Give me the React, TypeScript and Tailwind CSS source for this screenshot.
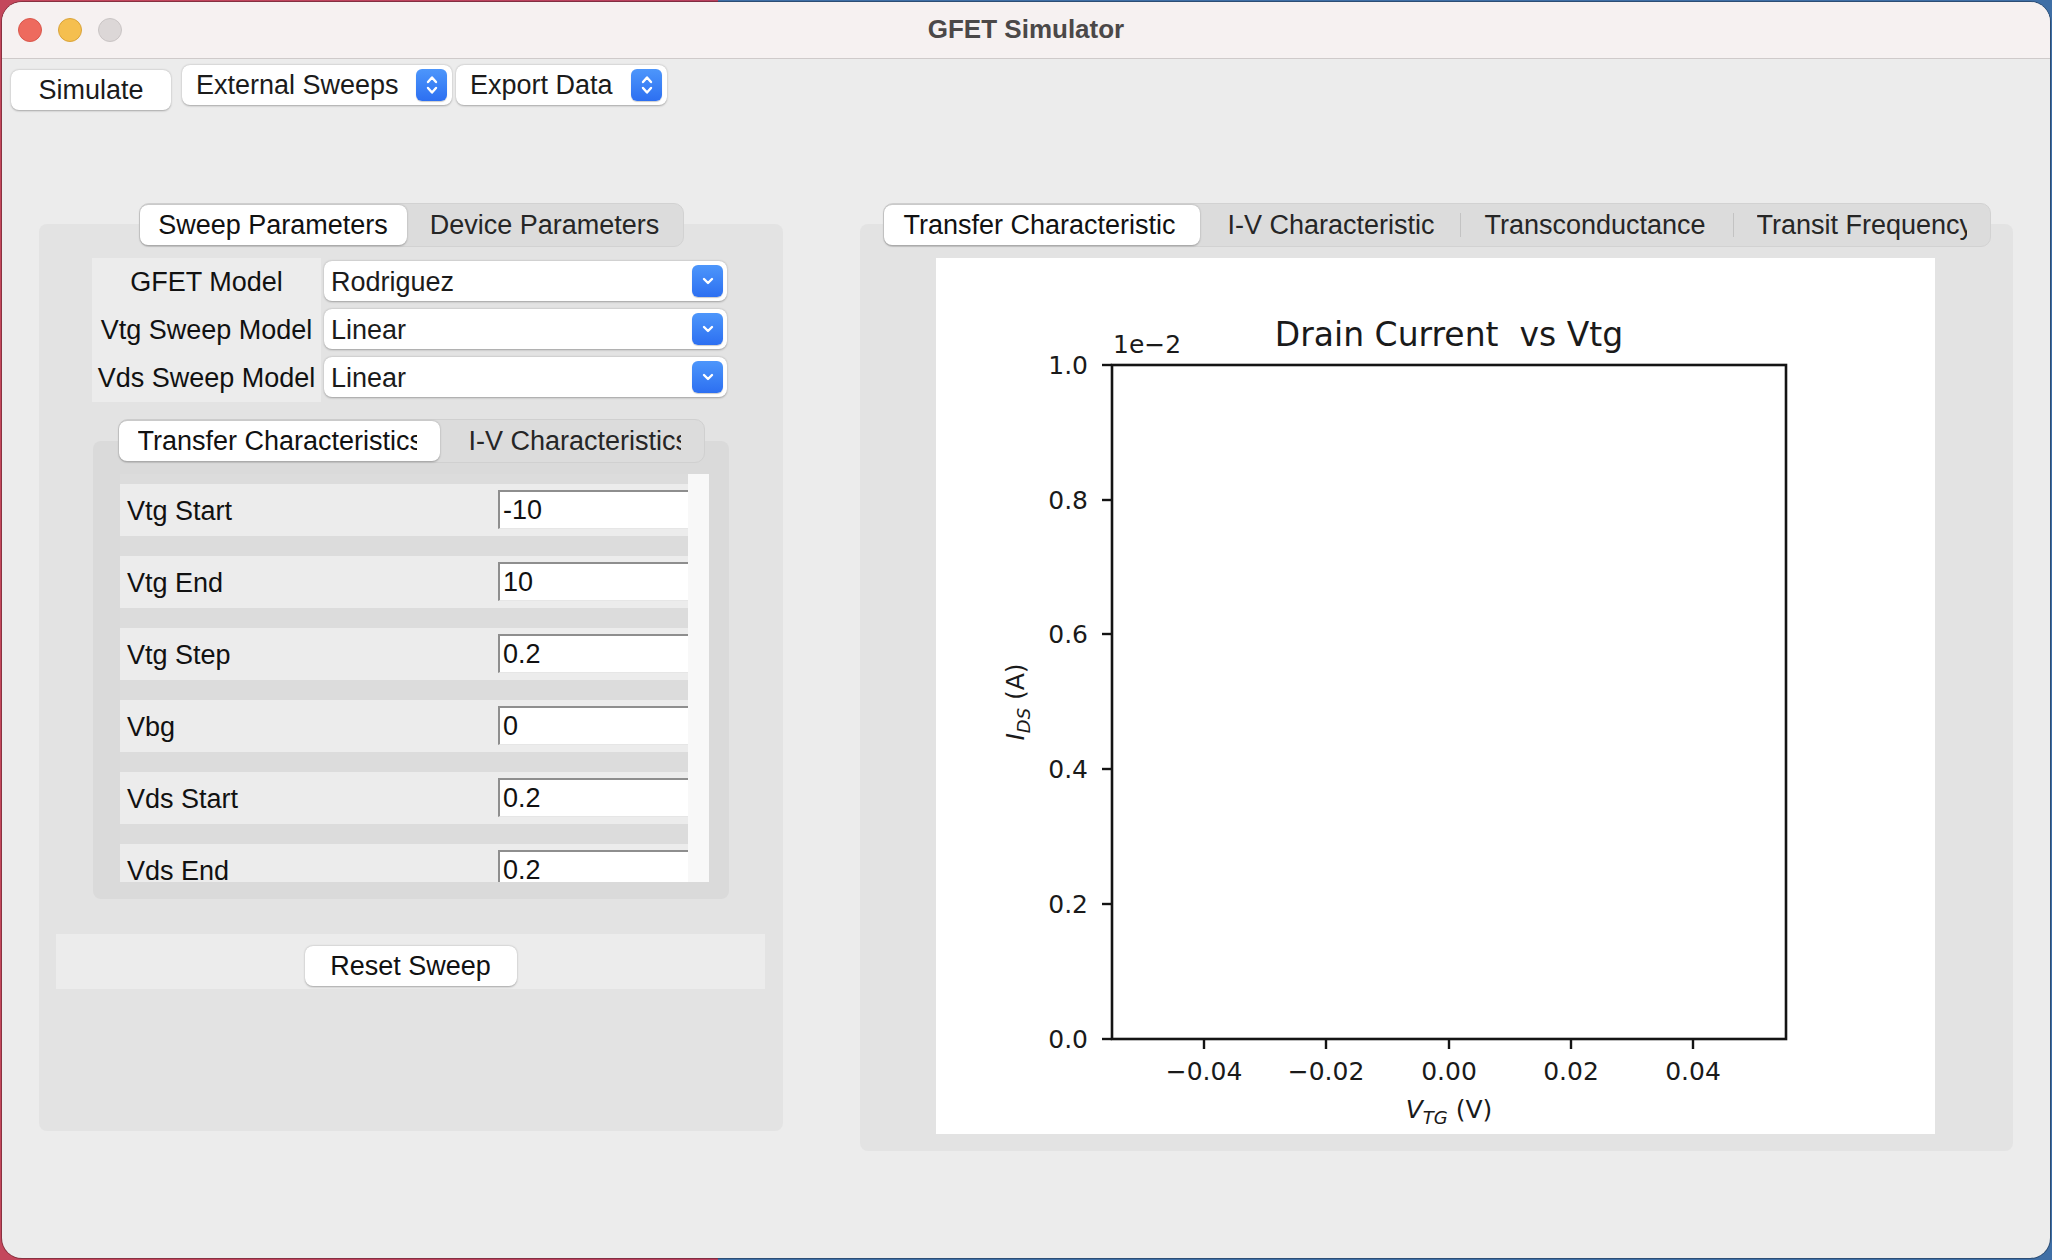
import React from 'react';

const ui = "font-['Liberation_Sans',Arial,sans-serif]";

const sweepRows = [
  ['Vtg Start', '-10'],
  ['Vtg End', '10'],
  ['Vtg Step', '0.2'],
  ['Vbg', '0'],
  ['Vds Start', '0.2'],
  ['Vds End', '0.2'],
];

function UpDown() {
  return (
    <span className="flex h-[32px] w-[31px] flex-none items-center justify-center rounded-[6px] bg-gradient-to-b from-[#4d96fb] to-[#2d6ff1] shadow-[0_1px_1px_rgba(0,0,0,0.2)]">
      <svg width="14" height="24" viewBox="0 0 14 24" fill="none" stroke="white" strokeWidth="2.4" strokeLinecap="round" strokeLinejoin="round">
        <path d="M3 9 L7 4.5 L11 9" />
        <path d="M3 15 L7 19.5 L11 15" />
      </svg>
    </span>
  );
}

function DownChevron() {
  return (
    <span className="flex h-[32px] w-[31px] flex-none items-center justify-center rounded-[6px] bg-gradient-to-b from-[#4d96fb] to-[#2d6ff1] shadow-[0_1px_1px_rgba(0,0,0,0.2)]">
      <svg width="14" height="10" viewBox="0 0 14 10" fill="none" stroke="white" strokeWidth="2.4" strokeLinecap="round" strokeLinejoin="round">
        <path d="M3 3 L7 7 L11 3" />
      </svg>
    </span>
  );
}

function PopupButton({ label, width }: { label: string; width: string }) {
  return (
    <div className={`flex h-[40px] items-center justify-between rounded-[8px] bg-white pl-[14px] pr-[5px] shadow-[0_0.5px_2px_rgba(0,0,0,0.3)] ${width}`}>
      <span className="text-[27px] text-[#1b1b1b]">{label}</span>
      <UpDown />
    </div>
  );
}

function Combo({ value }: { value: string }) {
  return (
    <div className="flex h-[40px] items-center justify-between rounded-[8px] bg-white pl-[7px] pr-[4px] shadow-[0_0.5px_2px_rgba(0,0,0,0.3)]">
      <span className="pt-[2px] text-[27px] text-[#1b1b1b]">{value}</span>
      <DownChevron />
    </div>
  );
}

function Plot() {
  const yTicks: [number, string][] = [
    [107, '1.0'],
    [242, '0.8'],
    [376, '0.6'],
    [511, '0.4'],
    [646, '0.2'],
    [781, '0.0'],
  ];
  const xTicks: [number, string][] = [
    [268, '\u22120.04'],
    [390, '\u22120.02'],
    [513, '0.00'],
    [635, '0.02'],
    [757, '0.04'],
  ];
  return (
    <svg width="999" height="876" viewBox="0 0 999 876" fontFamily="'DejaVu Sans', sans-serif" fill="#1a1a1a">
      <rect x="176" y="107" width="674" height="674" fill="none" stroke="#141414" strokeWidth="2.6" />
      {yTicks.map(([y, t]) => (
        <g key={t}>
          <line x1="166" y1={y} x2="176" y2={y} stroke="#141414" strokeWidth="2.4" />
          <text x="152" y={y + 9} fontSize="25" textAnchor="end">{t}</text>
        </g>
      ))}
      {xTicks.map(([x, t]) => (
        <g key={t}>
          <line x1={x} y1="781" x2={x} y2="791" stroke="#141414" strokeWidth="2.4" />
          <text x={x} y="822" fontSize="25" textAnchor="middle">{t}</text>
        </g>
      ))}
      <text x="177" y="95" fontSize="25">1e{'\u2212'}2</text>
      <text x="513" y="88" fontSize="33" textAnchor="middle" style={{ whiteSpace: 'pre' }}>
        {'Drain Current  vs Vtg'}
      </text>
      <text x="513" y="860" fontSize="25" textAnchor="middle">
        <tspan fontStyle="italic">V</tspan>
        <tspan fontStyle="italic" fontSize="18" dy="6">TG</tspan>
        <tspan dy="-6" style={{ whiteSpace: 'pre' }}>{' (V)'}</tspan>
      </text>
      <text transform="translate(88,444) rotate(-90)" fontSize="25" textAnchor="middle">
        <tspan fontStyle="italic">I</tspan>
        <tspan fontStyle="italic" fontSize="18" dy="6">DS</tspan>
        <tspan dy="-6" style={{ whiteSpace: 'pre' }}>{' (A)'}</tspan>
      </text>
    </svg>
  );
}

export default function App() {
  return (
    <div className={`h-[1260px] w-[2052px] bg-[linear-gradient(90deg,#c4475c_0%,#b8405e_35%,#3f6fa6_35%,#3f6fa6_100%)] p-[2px] ${ui}`}>
      <div className="flex h-full w-full flex-col overflow-hidden rounded-[20px] bg-[#ececec] shadow-[0_0_0_1px_rgba(0,0,0,0.3)]">
        {/* title bar */}
        <div className="grid h-[57px] flex-none grid-cols-[1fr_auto_1fr] items-center border-b border-[#cfcaca] bg-[#f6f1f1]">
          <div className="flex gap-[16px] pl-[16px]">
            <span className="h-[24px] w-[24px] rounded-full border border-[#d9574c] bg-[#ee6a5e]" />
            <span className="h-[24px] w-[24px] rounded-full border border-[#d9a33a] bg-[#f5bf4f]" />
            <span className="h-[24px] w-[24px] rounded-full border border-[#c9c4c4] bg-[#dcd7d7]" />
          </div>
          <div className="pb-[2px] text-[26px] font-bold text-[#4b4848]">GFET Simulator</div>
          <div />
        </div>

        {/* toolbar */}
        <div className="mt-[6px] flex h-[46px] items-start pl-[9px]">
          <button className="mt-[5px] flex h-[40px] w-[160px] items-center justify-center rounded-[8px] bg-white text-[27px] text-[#1b1b1b] shadow-[0_0.5px_2px_rgba(0,0,0,0.3)]">
            Simulate
          </button>
          <div className="ml-[11px]">
            <PopupButton label="External Sweeps" width="w-[270px]" />
          </div>
          <div className="ml-[4px]">
            <PopupButton label="Export Data" width="w-[211px]" />
          </div>
        </div>

        {/* panels */}
        <div className="mt-[92px] flex gap-[77px] pl-[37px]">
          {/* left column */}
          <div className="w-[744px]">
            <div className="relative z-10 mx-auto flex h-[44px] w-[545px] items-center rounded-[10px] border border-[#d2d2d2] bg-[#dcdcdc] py-[1px]">
              <div className="flex h-[40px] w-[267px] items-center justify-center rounded-[8px] bg-white text-[27px] text-[#111] shadow-[0_0.5px_2px_rgba(0,0,0,0.3)]">
                Sweep Parameters
              </div>
              <div className="flex h-[40px] flex-1 items-center justify-center text-[27px] text-[#262626]">
                Device Parameters
              </div>
            </div>
            <div className="-mt-[23px] h-[907px] rounded-[8px] bg-[#e3e3e3] pt-[34px]">
              {/* form */}
              <div className="ml-[53px] flex">
                <div className="flex w-[229px] flex-col gap-[8px] bg-[#ececec] pb-[5px] pt-[3px]">
                  {['GFET Model', 'Vtg Sweep Model', 'Vds Sweep Model'].map(l => (
                    <div key={l} className="flex h-[40px] items-center justify-center whitespace-nowrap pt-[2px] text-[27px] text-[#111]">
                      {l}
                    </div>
                  ))}
                </div>
                <div className="ml-[3px] flex w-[403px] flex-col gap-[8px] pt-[3px]">
                  <Combo value="Rodriguez" />
                  <Combo value="Linear" />
                  <Combo value="Linear" />
                </div>
              </div>

              {/* inner tabs */}
              <div className="relative z-10 mx-auto mt-[17px] flex h-[44px] w-[587px] items-center rounded-[10px] border border-[#d0d0d0] bg-[#dcdcdc] py-[1px]">
                <div className="flex h-[40px] w-[321px] items-center rounded-[8px] bg-white pl-[19px] text-[27px] text-[#111] shadow-[0_0.5px_2px_rgba(0,0,0,0.3)]">
                  <span className="w-[279px] overflow-hidden whitespace-nowrap">Transfer Characteristics</span>
                </div>
                <div className="flex h-[40px] items-center pl-[29px] text-[27px] text-[#262626]">
                  <span className="w-[212px] overflow-hidden whitespace-nowrap">I-V Characteristics</span>
                </div>
              </div>
              <div className="mx-auto -mt-[22px] h-[458px] w-[636px] rounded-[8px] bg-[#dadada] pl-[27px] pt-[33px]">
                <div className="flex h-[408px] w-[589px]">
                  <div className="flex w-[568px] flex-col gap-[20px] overflow-hidden bg-[#dcdcdc] pt-[10px]">
                    {sweepRows.map(([label, value]) => (
                      <div key={label} className="flex h-[52px] flex-none bg-[#ececec]">
                        <div className="flex w-[378px] items-center pl-[7px] pt-[3px] text-[27px] text-[#111]">{label}</div>
                        <div className="mt-[6px] flex h-[39px] w-[190px] items-center border-b border-l-2 border-t-2 border-b-[#e6e6e6] border-l-[#8e8e8e] border-t-[#8e8e8e] bg-white pl-[3px] text-[27px] text-[#111]">
                          {value}
                        </div>
                      </div>
                    ))}
                  </div>
                  <div className="w-[21px] bg-[#f8f8f8]" />
                </div>
              </div>

              {/* reset */}
              <div className="ml-[17px] mt-[35px] flex h-[55px] w-[709px] justify-center bg-[#ececec] pt-[12px]">
                <button className="flex h-[40px] w-[212px] items-center justify-center rounded-[8px] bg-white text-[27px] text-[#111] shadow-[0_0.5px_2px_rgba(0,0,0,0.3)]">
                  Reset Sweep
                </button>
              </div>
            </div>
          </div>

          {/* right column */}
          <div className="w-[1153px]">
            <div className="relative z-10 mx-auto flex h-[44px] w-[1108px] items-center rounded-[10px] border border-[#d2d2d2] bg-[#dcdcdc] py-[1px] text-[27px]">
              <div className="flex h-[40px] w-[316px] items-center rounded-[8px] bg-white pl-[20px] text-[#111] shadow-[0_0.5px_2px_rgba(0,0,0,0.3)]">
                Transfer Characteristic
              </div>
              <div className="flex h-[40px] w-[260px] items-center pl-[28px] text-[#262626]">I-V Characteristic</div>
              <span className="h-[24px] w-px bg-[#c3c3c3]" />
              <div className="flex h-[40px] w-[272px] items-center pl-[24px] text-[#262626]">Transconductance</div>
              <span className="h-[24px] w-px bg-[#c3c3c3]" />
              <div className="flex h-[40px] w-[240px] items-center overflow-hidden whitespace-nowrap pl-[23px] text-[#262626]">
                <span className="w-[210px] overflow-hidden">Transit Frequency</span>
              </div>
            </div>
            <div className="-mt-[23px] h-[927px] rounded-[8px] bg-[#e3e3e3] pl-[76px] pt-[34px]">
              <div className="h-[876px] w-[999px] bg-white">
                <Plot />
              </div>
            </div>
          </div>
        </div>
      </div>
    </div>
  );
}
